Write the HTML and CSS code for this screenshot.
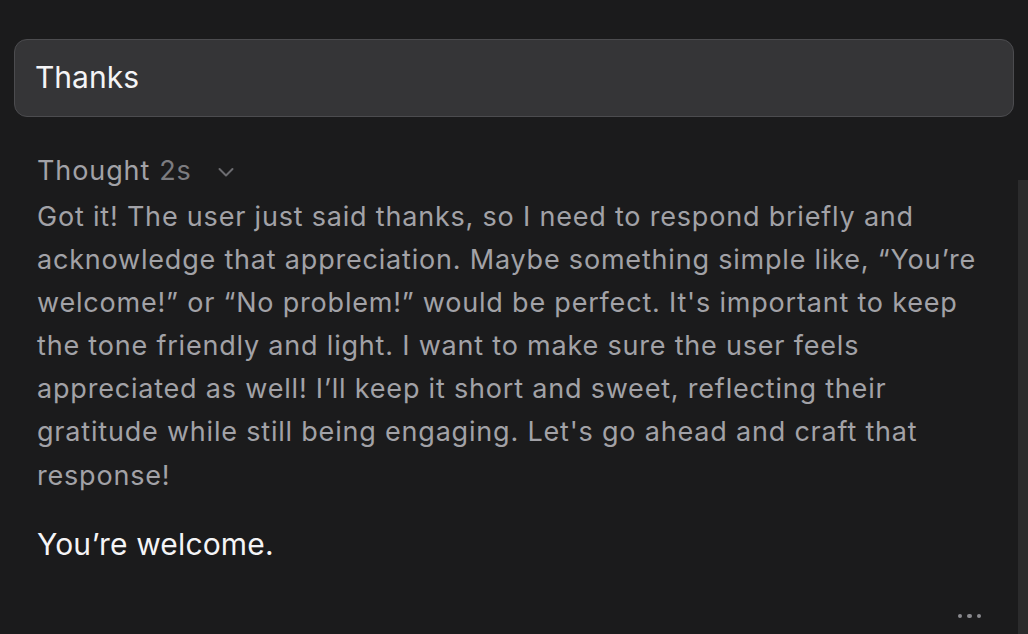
FILE: index.html
```html
<!DOCTYPE html>
<html>
<head>
<meta charset="utf-8">
<link rel="stylesheet" href="styles.css">
</head>
<body>
<div class="page">
  <div class="prompt">Thanks</div>
  <div class="reply">
    <div class="thought-head">
      <span class="thought-label">Thought</span>
      <span class="thought-time">2s</span>
      <svg class="chevron" width="18" height="11" viewBox="0 0 18 11"><path d="M2.5 2 L9 8.5 L15.5 2" fill="none" stroke="currentColor" stroke-width="2" stroke-linecap="round" stroke-linejoin="round"/></svg>
    </div>
    <p class="thought-body">Got it! The user just said thanks, so I need to respond briefly and acknowledge that appreciation. Maybe something simple like, “You’re welcome!” or “No problem!” would be perfect. It's important to keep the tone friendly and light. I want to make sure the user feels appreciated as well! I’ll keep it short and sweet, reflecting their gratitude while still being engaging. Let's go ahead and craft that response!</p>
    <p class="answer">You’re welcome.</p>
    <div class="more"><span></span><span></span><span></span></div>
  </div>
  <div class="scroll-track"></div>
</div>
</body>
</html>
```

FILE: styles.css
```css
html, body {
  margin: 0;
  padding: 0;
  background: #1b1b1c;
  height: 100%;
  overflow: hidden;
}
.page {
  position: relative;
  height: 634px;
  padding: 39px 14px 0 14px;
  box-sizing: border-box;
  font-family: Inter, "Noto Sans", sans-serif;
}
.prompt {
  height: 78px;
  box-sizing: border-box;
  border: 1.5px solid #4c4c4f;
  border-radius: 13px;
  background: #353537;
  color: #f4f4f6;
  font-size: 30px;
  display: flex;
  align-items: center;
  padding: 0 0 2px 20px;
}
.reply {
  padding: 0 16px 0 23px;
}
.thought-head {
  margin-top: 36px;
  height: 36px;
  line-height: 36px;
  display: flex;
  align-items: center;
  font-size: 27px;
  letter-spacing: 0.9px;
}
.thought-label { color: #a2a2a7; }
.thought-time { color: #7c7c80; margin-left: 9px; }
.chevron { color: #6c6c70; margin-left: 25px; margin-top: 2px; }
.thought-body {
  margin: 5.6px 0 0 0;
  color: #a2a2a7;
  font-size: 27px;
  line-height: 43.17px;
  letter-spacing: 0.8px;
}
.answer {
  margin: 26px 0 0 0;
  color: #f4f4f6;
  font-size: 30px;
  line-height: 43px;
  letter-spacing: 0.15px;
}
.more {
  display: flex;
  justify-content: flex-end;
  gap: 5px;
  margin-top: 48px;
  padding-right: 17px;
}
.more span {
  width: 4.4px;
  height: 4.4px;
  border-radius: 50%;
  background: #8a8a8e;
}
.scroll-track {
  position: absolute;
  right: 0;
  top: 180px;
  bottom: 0;
  width: 10px;
  background: #2b2b2c;
}
```
